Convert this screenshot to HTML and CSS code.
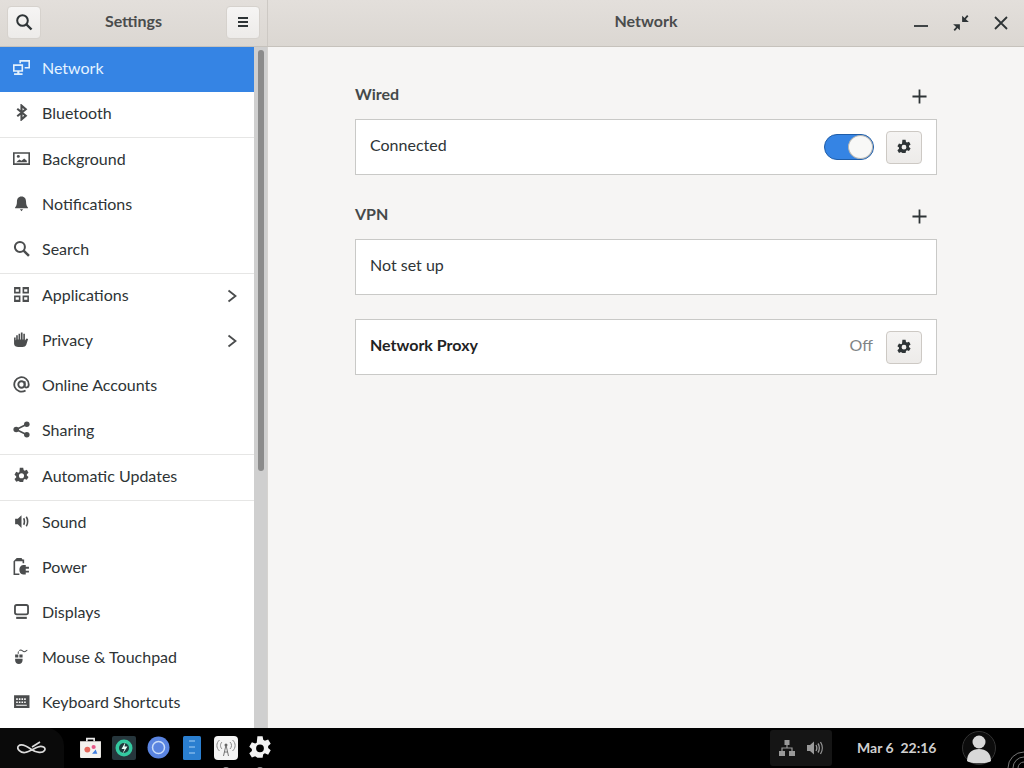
FILE: index.html
```html
<!DOCTYPE html>
<html lang="en">
<head>
<meta charset="utf-8">
<title>Settings</title>
<link rel="stylesheet" href="styles.css">
</head>
<body>
<svg class="defs" width="0" height="0">
  <symbol id="gear" viewBox="0 0 16 16"><path fill-rule="evenodd" d="M6.400 .8h3.200l.4 2.100 1 .6 2-.8 1.600 2.700-1.600 1.400v1.200l1.600 1.400-1.600 2.700-2-.8-1 .6-.4 2.100H6.400L6 13.700l-1-.6-2 .8-1.600-2.700L3 9.800V8.600L1.400 7.200 3 4.500l2 .8 1-.6zM8 5.800a2.400 2.400 0 1 0 0 4.800 2.400 2.400 0 0 0 0-4.800z"/></symbol>
  <symbol id="chev" viewBox="0 0 16 16"><path d="M4.500 2.500l7 5.500-7 5.500" fill="none" stroke="currentColor" stroke-width="1.800"/></symbol>
  <symbol id="plus" viewBox="0 0 16 16"><path d="M8 .5v15M.5 8h15" fill="none" stroke="currentColor" stroke-width="1.900"/></symbol>
</svg>
<div class="screen">
  <div class="window">
    <header class="titlebar">
      <div class="title-left">
        <button class="hbtn" type="button"><svg width="18" height="18" viewBox="0 0 18 18"><circle cx="7.500" cy="7.500" r="5.300" fill="none" stroke="#2e3436" stroke-width="2"/><path d="M11.500 11.500l5 5" stroke="#2e3436" stroke-width="2.400"/></svg></button>
        <span class="app-title">Settings</span>
        <button class="hbtn" type="button"><svg width="12" height="12" viewBox="0 0 12 12"><path d="M1 2h10M1 6h10M1 10h10" stroke="#2e3436" stroke-width="1.900"/></svg></button>
      </div>
      <div class="title-right">
        <span class="page-title">Network</span>
        <div class="wm">
          <svg width="16" height="16" viewBox="0 0 16 16"><path d="M1 11h14" stroke="#2e3436" stroke-width="1.800"/></svg>
          <svg width="18" height="18" viewBox="0 0 16 16"><path d="M9 7V1.500L15 7zM7 9v5.500L1 9z" fill="#2e3436"/><path d="M10 6l4-4.500M6 10l-4 4.500" stroke="#2e3436" stroke-width="1.600"/></svg>
          <svg width="16" height="16" viewBox="0 0 16 16"><path d="M2 2l12 12M14 2L2 14" stroke="#2e3436" stroke-width="1.800"/></svg>
        </div>
      </div>
    </header>
    <div class="body">
      <nav class="sidebar">
        <ul class="rows">
          <li class="row active"><svg class="ic" viewBox="0 0 16 16"><path fill-rule="evenodd" d="M0 5h9.500v7H6v1.500h3V15H1v-1.500h3V12H0zM1.500 6.500v4h6.500v-4z"/><path d="M6 1h10v8h-5V7.500h3.500v-5H7.500V4H6z"/></svg><span>Network</span></li>
          <li class="row sep"><svg class="ic" viewBox="0 0 16 16"><path d="M4 4.500l8 6.500-4 3.500V1.500L12 5l-8 6.500" fill="none" stroke="currentColor" stroke-width="2"/></svg><span>Bluetooth</span></li>
          <li class="row"><svg class="ic" viewBox="0 0 16 16"><path fill-rule="evenodd" d="M0 2h16v12H0zM1.500 3.500v9h13v-9z"/><circle cx="5" cy="6" r="1.400"/><path d="M3 11.500l3-2.500 2 1 2.500-2 2.500 2v1.500z"/></svg><span>Background</span></li>
          <li class="row"><svg class="ic" viewBox="0 0 16 16"><path d="M8 1.500c3 0 4.300 2.200 4.300 5 0 2.500.7 4 1.700 5v1H2v-1c1-1 1.700-2.500 1.700-5 0-2.800 1.300-5 4.300-5zM6.500 13.500h3L8 15.200z"/></svg><span>Notifications</span></li>
          <li class="row sep"><svg class="ic" viewBox="0 0 16 16"><circle cx="6.500" cy="6.500" r="4.700" fill="none" stroke="currentColor" stroke-width="1.900"/><path d="M10 10l5 5" stroke="currentColor" stroke-width="2.300"/></svg><span>Search</span></li>
          <li class="row"><svg class="ic" viewBox="0 0 16 16"><path fill-rule="evenodd" d="M1 1h6v6H1zM2.500 3v2.500h3V3zM9 1h6v6H9zM10.500 3v2.500h3V3zM1 9h6v6H1zM2.500 10.500V13h3v-2.500zM9 9h6v6H9zM10.500 10.500V13h3v-2.500z"/></svg><span>Applications</span><svg class="chev"><use href="#chev"/></svg></li>
          <li class="row"><svg class="ic" viewBox="0 0 16 16"><path d="M3 8V4h1.500v4h.7V2.500h1.500V8h.7V1.500H9V8h.7V2.500h1.500V9l1.500-2 1.500.5L12.500 13c-.7 1.500-1.800 2-3.500 2H5c-2 0-4-1-4-3V6h1.500v3z"/></svg><span>Privacy</span><svg class="chev"><use href="#chev"/></svg></li>
          <li class="row"><svg class="ic" viewBox="0 0 16 16"><circle cx="8" cy="8" r="3" fill="none" stroke="currentColor" stroke-width="1.800"/><path d="M11 5v4.500c0 2 3.800 2 3.800-1.500a6.800 6.800 0 1 0-3 5.600" fill="none" stroke="currentColor" stroke-width="1.700"/></svg><span>Online Accounts</span></li>
          <li class="row sep"><svg class="ic" viewBox="0 0 16 16"><circle cx="3" cy="8" r="2.600"/><circle cx="13" cy="3" r="2.600"/><circle cx="13" cy="13" r="2.600"/><path d="M3 8l10-5M3 8l10 5" stroke="currentColor" stroke-width="1.600"/></svg><span>Sharing</span></li>
          <li class="row sep"><svg class="ic"><use href="#gear"/></svg><span>Automatic Updates</span></li>
          <li class="row"><svg class="ic" viewBox="0 0 16 16"><path d="M2 5.500h2.500L8 2v12l-3.500-3.500H2z"/><path d="M10 5c1 1.500 1 4.500 0 6M12.500 3.500c1.700 2.500 1.700 6.500 0 9" fill="none" stroke="currentColor" stroke-width="1.500"/></svg><span>Sound</span></li>
          <li class="row"><svg class="ic" viewBox="0 0 16 16"><path d="M3.500 0h4.500l1 1.500h1.500V5H9V3H2v11.500h4V16H.5V3z"/><path d="M9.500 6.500h2.500v1.800h3V10h-3v2h3v1.700h-3v1.800H9.500A4.500 4.500 0 0 1 6 11a4.500 4.500 0 0 1 3.500-4.500z"/></svg><span>Power</span></li>
          <li class="row"><svg class="ic" viewBox="0 0 16 16"><path fill-rule="evenodd" d="M3.500 1h9A2.500 2.500 0 0 1 15 3.500V9a2.500 2.500 0 0 1-2.500 2.500h-9A2.500 2.500 0 0 1 1 9V3.500A2.500 2.500 0 0 1 3.500 1zM3.500 2.800a.8.8 0 0 0-.8.8v5.400c0 .4.4.8.8.8h9a.8.8 0 0 0 .8-.8V3.600a.8.8 0 0 0-.8-.8z"/><path d="M3 13h10v2H3z"/></svg><span>Displays</span></li>
          <li class="row"><svg class="ic" viewBox="0 0 16 16"><path d="M2 6h3v3H2zM6 6h3v3H6zM2 10h7v1.500c0 2-1.500 3.500-3.500 3.500S2 13.500 2 11.500zM5 2.800c.4 0 .5 2 .5 2.700h-1.100c0-1 .2-2.700.6-2.700z"/><path d="M6 2.500c2-2 3 1 4.500 1s1.800-1 3-1.500" fill="none" stroke="currentColor" stroke-width="1"/></svg><span>Mouse &amp; Touchpad</span></li>
          <li class="row"><svg class="ic" viewBox="0 0 16 16"><path fill-rule="evenodd" d="M1 2h14.500v12H1zM3 5v1.500h1.500V5zm2.500 0v1.500H7V5zM8 5v1.500h1.500V5zm2.500 0v1.500H12V5zM3 8v1.500h1.500V8zm2.500 0v1.500H7V8zM8 8v1.500h1.500V8zm2.500 0v1.500H12V8zM3 11v1h10v-1z"/></svg><span>Keyboard Shortcuts</span></li>
        </ul>
        <div class="scrolltrack"><div class="scrollthumb"></div></div>
      </nav>
      <main class="content">
        <div class="column">
          <section class="group">
            <div class="group-head"><h2>Wired</h2><svg class="plus"><use href="#plus"/></svg></div>
            <div class="card">
              <span class="label">Connected</span>
              <span class="switch"><span class="knob"></span></span>
              <button class="gearbtn" type="button"><svg><use href="#gear"/></svg></button>
            </div>
          </section>
          <section class="group vpn">
            <div class="group-head"><h2>VPN</h2><svg class="plus"><use href="#plus"/></svg></div>
            <div class="card"><span class="label">Not set up</span></div>
          </section>
          <div class="card">
            <span class="label strong">Network Proxy</span>
            <span class="off">Off</span>
            <button class="gearbtn" type="button"><svg><use href="#gear"/></svg></button>
          </div>
        </div>
      </main>
    </div>
  </div>
  <footer class="panel">
    <div class="panel-logo"><svg width="30" height="14" viewBox="0 0 30 14"><path d="M1.500 5c3-3 8 0 13 3.500s11 4 13 1-2.500-5-6.500-3.500c-4 1.500-9 5-13 5.500S-1 8 1.500 5zM15 6l8-5" fill="none" stroke="#dcdcdc" stroke-width="1.700"/></svg></div>
    <div class="apps">
      <span class="app"><svg width="23" height="23" viewBox="0 0 22 22"><path d="M7.500 5V2.500h7V5" fill="none" stroke="#eee" stroke-width="1.500"/><path d="M1 5h20v15a1 1 0 0 1-1 1H2a1 1 0 0 1-1-1z" fill="#f4f2ee"/><circle cx="8" cy="13" r="2.800" fill="#e5685c"/><circle cx="14" cy="10.500" r="2" fill="#e85a8a"/><path d="M12.500 17l3.500-4 1.500 4z" fill="#3f7de0"/></svg></span>
      <span class="app"><svg width="24" height="24" viewBox="0 0 24 24"><rect width="24" height="24" rx="2" fill="#26363c"/><circle cx="12" cy="12" r="8.500" fill="#33c9a0"/><circle cx="12" cy="12" r="5" fill="#1e3a3c"/><path d="M13.500 6l-4 7h3l-2 5 5-7.500h-3z" fill="#e8fff8"/></svg></span>
      <span class="app"><svg width="23" height="23" viewBox="0 0 23 23"><circle cx="11.500" cy="11.500" r="11" fill="#5a84e0"/><circle cx="11.500" cy="11.500" r="6" fill="none" stroke="#c9dcf8" stroke-width="1.500"/></svg></span>
      <span class="app"><svg width="18" height="24" viewBox="0 0 18 24"><rect width="18" height="24" rx="1.500" fill="#2b7fd0"/><path d="M6 5h6M6 11h6M6 17h6" stroke="#a8d2f5" stroke-width="1.200"/></svg></span>
      <span class="app running"><svg width="24" height="24" viewBox="0 0 24 24"><rect width="24" height="24" rx="4" fill="#f4f4f4"/><path d="M12 9l-2.500 11M12 9l2.500 11M10 16h4" stroke="#777" stroke-width="1" fill="none"/><circle cx="12" cy="9" r="1.500" fill="#666"/><path d="M8 6c-2 2-2 5 0 7M16 6c2 2 2 5 0 7M5.500 4c-3.500 3-3.500 8 0 11M18.500 4c3.500 3 3.500 8 0 11" stroke="#888" stroke-width="1" fill="none"/></svg></span>
      <span class="app running"><svg class="panel-gear" width="26" height="26"><use href="#gear"/></svg></span>
    </div>
    <div class="tray">
      <svg width="16" height="16" viewBox="0 0 16 16"><path d="M5.500 0h5v5h-5zM0 11h6v5H0zM10 11h6v5h-6z" fill="#999"/><path d="M8 5v3M3 11V8h10v3" fill="none" stroke="#999" stroke-width="1.200"/></svg>
      <svg width="16" height="16" viewBox="0 0 16 16"><path d="M0 5h3l4-3.500v13L3 11H0z" fill="#999"/><path d="M9 5c1 1.800 1 4.200 0 6M11 3.500c1.800 2.500 1.800 6.500 0 9M13.500 2c2.300 3.500 2.300 8.500 0 12" fill="none" stroke="#999" stroke-width="1.300"/></svg>
    </div>
    <time class="clock">Mar 6&nbsp; 22:16</time>
    <div class="avatar"><svg width="34" height="34" viewBox="0 0 34 34"><circle cx="17" cy="17" r="16.500" fill="#0c0c0c" stroke="#333"/><circle cx="17" cy="11" r="6.500" fill="#d8d8d8"/><path d="M5 30c0-8 5-12 12-12s12 4 12 12c-3 3-21 3-24 0z" fill="#d8d8d8"/></svg></div>
    <svg class="corner" width="24" height="24" viewBox="0 0 24 24"><circle cx="24" cy="24" r="6" fill="none" stroke="#777"/><circle cx="24" cy="24" r="11" fill="none" stroke="#777"/><circle cx="24" cy="24" r="16" fill="none" stroke="#777"/></svg>
  </footer>
</div>
</body>
</html>
```
FILE: styles.css
```css
* { box-sizing: border-box; }
html, body { margin: 0; height: 100%; }
body { font-family: Lato, "Liberation Sans", sans-serif; color: #2e3436; overflow: hidden; }
.defs { position: absolute; }
.screen { display: flex; flex-direction: column; width: 1024px; height: 768px; }
.window { flex: 1; min-height: 0; display: flex; flex-direction: column; background: #f6f5f4; }

.titlebar { height: 47px; flex: none; display: flex; background: linear-gradient(#e3dfdb, #dbd7d2); border-bottom: 1px solid #c6c2bc; }
.title-left { width: 268px; flex: none; display: flex; align-items: center; justify-content: space-between; padding: 0 7px 2px; border-right: 1px solid #cdc9c4; }
.hbtn { width: 34px; height: 33px; padding: 0; display: flex; align-items: center; justify-content: center; background: linear-gradient(#f6f5f4, #edebe9); border: 1px solid #d6d2cd; border-radius: 4px; }
.app-title, .page-title { font-size: 16px; font-weight: 700; color: #4a4c4c; padding-bottom: 3px; }
.title-right { flex: 1; position: relative; display: flex; align-items: center; justify-content: center; padding-bottom: 2px; }
.wm { position: absolute; right: 15px; top: 14px; display: flex; align-items: center; gap: 23px; color: #2e3436; }

.body { flex: 1; min-height: 0; display: flex; }
.sidebar { width: 268px; flex: none; display: flex; overflow: hidden; border-right: 1px solid #d5d3d0; }
.rows { flex: 1; min-width: 0; margin: 0; padding: 0; list-style: none; background: #fff; }
.row { height: 45px; display: flex; align-items: center; padding: 0 14px 4px 13px; font-size: 16px; color: #2e3436; }
.row > span { flex: 1; margin-left: 12px; }
.row.sep { height: 46px; border-bottom: 1px solid #e6e6e5; }
.row.active { background: #3584e4; color: #fff; }
.row.active > span { color: #e4f3ff; }
.ic { width: 17px; height: 17px; fill: currentColor; flex: none; color: #4b4d4e; }
.row.active .ic { color: #e4f1fc; }
.chev { width: 16px; height: 16px; color: #4a4c4d; flex: none; margin-top: 2px; }
.scrolltrack { width: 13px; flex: none; background: #cfcfcf; padding: 3px 4px 0; }
.scrollthumb { width: 6px; height: 421px; border-radius: 3px; background: #8b8b8b; }

.content { flex: 1; min-width: 0; display: flex; justify-content: center; padding-top: 36px; }
.column { width: 582px; display: flex; flex-direction: column; gap: 24px; }
.group.vpn { margin-top: 4px; }
.group-head { display: flex; align-items: center; justify-content: space-between; height: 36px; padding: 0 10px 16px 0; }
.group-head h2 { margin: 0; font-size: 16px; font-weight: 700; color: #45494a; }
.plus { width: 15px; height: 15px; color: #2e3436; margin-top: 6px; }
.card { height: 56px; display: flex; align-items: center; background: #fff; border: 1px solid #c9c9c7; padding: 0 14px; font-size: 16px; }
.label { flex: 1; padding-bottom: 6px; color: #2e3436; }
.label.strong { font-weight: 700; color: #1f2324; }
.off { color: #7f8485; margin-right: 13px; padding-bottom: 6px; }
.switch { width: 50px; height: 26px; border-radius: 13px; background: #3584e4; border: 1px solid #1f5da8; margin-right: 12px; display: flex; justify-content: flex-end; }
.knob { width: 25px; height: 24px; border-radius: 50%; background: #f8f8f7; border: 1px solid #b5b5b2; }
.gearbtn { width: 36px; height: 33px; padding: 0; display: flex; align-items: center; justify-content: center; background: linear-gradient(#f5f4f3, #edebe9); border: 1px solid #cdc9c4; border-radius: 4px; }
.gearbtn svg { width: 16px; height: 16px; fill: #2e3436; }

.panel { height: 40px; flex: none; display: flex; align-items: center; background: #000; position: relative; }
.panel-logo { width: 64px; height: 100%; display: flex; align-items: center; justify-content: center; background: #0a0a0a; border-radius: 0 18px 0 0; }
.apps { display: flex; align-items: center; gap: 10px; margin-left: 14px; margin-top: -1px; }
.app { width: 24px; height: 24px; display: flex; align-items: center; justify-content: center; position: relative; }
.app.running::after { content: ""; position: absolute; left: 9px; bottom: -12px; width: 6px; height: 5px; border-radius: 3px; background: #888; }
.panel-gear { fill: #f2f2f2; flex: none; }
.tray { margin-left: 498px; width: 62px; height: 36px; display: flex; align-items: center; justify-content: center; gap: 12px; background: #151515; border-radius: 3px; }
.clock { margin-left: 25px; font-size: 14px; font-weight: 700; color: #d0d0d0; white-space: nowrap; padding-bottom: 2px; }
.avatar { margin-left: 25px; display: flex; }
.corner { position: absolute; right: 0; bottom: 0; }
```
